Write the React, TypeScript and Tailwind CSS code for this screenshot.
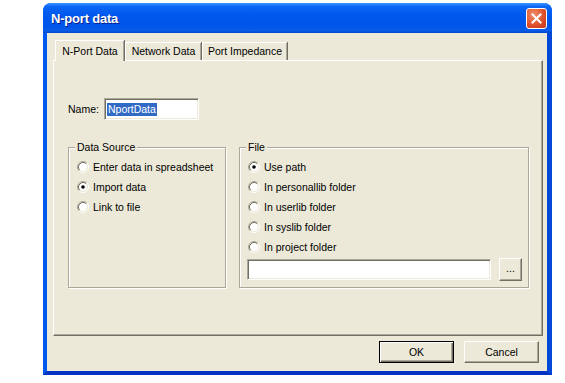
import React from "react"

const face = "bg-[#ECE9D8]"

function Radio({ checked }: { checked?: boolean }) {
  return (
    <svg width="12" height="12" viewBox="0 0 12 12" className="shrink-0">
      <circle cx="6" cy="6" r="4.2" fill="#fff" />
      <path d="M2.11 9.89 A5.5 5.5 0 0 1 9.89 2.11" stroke="#ACA899" fill="none" />
      <path d="M2.82 9.18 A4.5 4.5 0 0 1 9.18 2.82" stroke="#716F64" fill="none" />
      <path d="M9.89 2.11 A5.5 5.5 0 0 1 2.11 9.89" stroke="#fff" fill="none" />
      <path d="M9.18 2.82 A4.5 4.5 0 0 1 2.82 9.18" stroke="#ECE9D8" fill="none" />
      {checked && <circle cx="6" cy="6" r="1.8" fill="#000" />}
    </svg>
  )
}

function RadioRow({ label, checked }: { label: string; checked?: boolean }) {
  return (
    <div className="flex h-[20px] items-center gap-[4px] pl-[2px]">
      <Radio checked={checked} />
      <span className="text-black">{label}</span>
    </div>
  )
}

// classic raised push button
function Button({ label, isDefault }: { label: string; isDefault?: boolean }) {
  const frame = isDefault
    ? "border border-black shadow-[inset_1px_1px_0_#fff,inset_-1px_-1px_0_#716F64,inset_-2px_-2px_0_#ACA899]"
    : "border border-t-white border-l-white border-r-[#716F64] border-b-[#716F64] shadow-[inset_-1px_-1px_0_#ACA899]"
  return (
    <div className={`flex h-[22px] w-[75px] items-center justify-center ${face} ${frame}`}>
      <span className="text-black">{label}</span>
    </div>
  )
}

const sunken =
  "border border-t-[#ACA899] border-l-[#ACA899] border-r-white border-b-white shadow-[inset_1px_1px_0_#716F64,inset_-1px_-1px_0_#ECE9D8] bg-white"

const groupBox =
  "border border-[#ACA899] shadow-[inset_1px_1px_0_#fff,1px_1px_0_#fff] px-[6px]"

export default function App() {
  return (
    <div className="h-[383px] w-[565px] overflow-hidden bg-white pl-[43px] pt-[3px] text-[10.5px] leading-[13px] [font-family:'Liberation_Sans',Arial,sans-serif]">
      <div className="flex h-[372px] w-[509px] flex-col overflow-hidden rounded-t-[8px] bg-[#0055E5]">
        {/* TITLE BAR */}
        <div className="flex h-[30px] shrink-0 items-center justify-between bg-[linear-gradient(to_bottom,#3D95FF_0%,#0A66F5_12%,#0058EE_40%,#0055E8_80%,#0A5BE6_92%,#0046C8_100%)] pl-[8px] pr-[5px]">
          <span className="text-[13px] font-bold tracking-[-0.2px] text-white [text-shadow:1px_1px_#0A1F8A]">
            N-port data
          </span>
          <div className="mt-[1px] flex h-[21px] w-[21px] items-center justify-center rounded-[3px] border border-white bg-[radial-gradient(circle_at_35%_30%,#F08E6E_0%,#E0522C_55%,#C2351A_100%)]">
            <svg width="11" height="11" viewBox="0 0 11 11">
              <path d="M1.5 1.5 L9.5 9.5 M9.5 1.5 L1.5 9.5" stroke="#fff" strokeWidth="2" strokeLinecap="square" />
            </svg>
          </div>
        </div>

        {/* CLIENT AREA */}
        <div className={`flex flex-1 flex-col border-l-4 border-r-[5px] border-b-4 border-l-[#0058EE] border-r-[#0048D8] border-b-[#0034C4] ${face} pl-[6px] pr-[4px] pt-[7px]`}>
          {/* TABS */}
          <div className="ml-[2px] flex h-[20px] items-end">
            <div className={`relative z-10 -mb-[1px] flex h-[21px] w-[69px] items-start justify-center pt-[4px] ${face} border-l border-t border-white shadow-[inset_-1px_0_0_#ACA899,1px_0_0_#716F64]`}>
              N-Port Data
            </div>
            <div className={`ml-[1px] flex h-[18px] w-[76px] items-center justify-center ${face} border-l border-t border-white shadow-[inset_-1px_0_0_#ACA899,1px_0_0_#716F64]`}>
              Network Data
            </div>
            <div className={`ml-[1px] flex h-[18px] w-[85px] items-center justify-center ${face} border-l border-t border-white shadow-[inset_-1px_0_0_#ACA899,1px_0_0_#716F64]`}>
              Port Impedance
            </div>
          </div>

          {/* TAB PANEL */}
          <div className={`flex h-[276px] w-[490px] flex-col ${face} border-l border-t border-white border-r border-b border-r-[#716F64] border-b-[#716F64] shadow-[inset_-1px_-1px_0_#ACA899] pl-[14px]`}>
            <div className="mt-[37px] flex items-center">
              <span className="w-[36px]">Name:</span>
              <div className={`flex h-[22px] w-[95px] items-center pl-[2px] ${sunken}`}>
                <span className="bg-[#316AC5] px-[1px] text-white">NportData</span>
              </div>
            </div>

            <div className="mt-[21px] flex gap-[13px]">
              <fieldset className={`h-[147px] w-[158px] ${groupBox}`}>
                <legend className={`px-[2px] ${face}`}>Data Source</legend>
                <div className="mt-[3px] flex flex-col">
                  <RadioRow label="Enter data in spreadsheet" />
                  <RadioRow label="Import data" checked />
                  <RadioRow label="Link to file" />
                </div>
              </fieldset>

              <fieldset className={`h-[147px] w-[290px] ${groupBox}`}>
                <legend className={`px-[2px] ${face}`}>File</legend>
                <div className="mt-[3px] flex flex-col">
                  <RadioRow label="Use path" checked />
                  <RadioRow label="In personallib folder" />
                  <RadioRow label="In userlib folder" />
                  <RadioRow label="In syslib folder" />
                  <RadioRow label="In project folder" />
                </div>
                <div className="ml-[1px] mt-[1px] flex items-center gap-[8px]">
                  <div className={`h-[21px] w-[244px] ${sunken}`} />
                  <div className={`flex h-[23px] w-[23px] items-center justify-center ${face} border border-t-white border-l-white border-r-[#716F64] border-b-[#716F64] shadow-[inset_-1px_-1px_0_#ACA899]`}>
                    <span className="-mt-[3px]">...</span>
                  </div>
                </div>
              </fieldset>
            </div>
          </div>

          {/* ACTION BUTTONS */}
          <div className="mt-[5px] flex justify-end gap-[10px] pr-[4px]">
            <Button label="OK" isDefault />
            <Button label="Cancel" />
          </div>
        </div>
      </div>
    </div>
  )
}
